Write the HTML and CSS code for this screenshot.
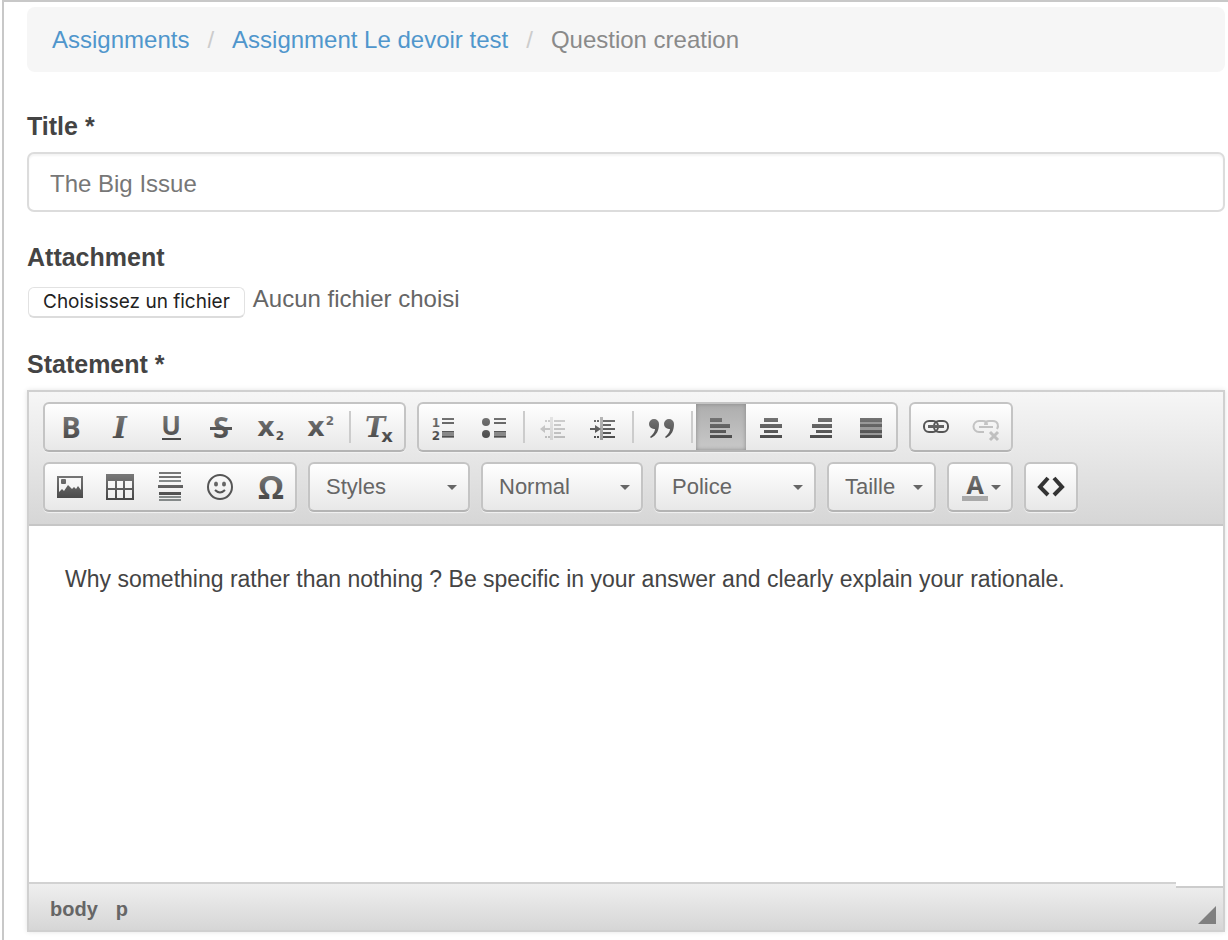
FILE: index.html
```html
<!DOCTYPE html>
<html lang="en">
<head>
<meta charset="utf-8">
<meta name="viewport" content="width=device-width, initial-scale=1">
<title>Question creation</title>
<link rel="stylesheet" href="styles.css">
</head>
<body>
<main class="page">
  <svg class="defs" aria-hidden="true">
    <defs>
      <linearGradient id="ink" gradientUnits="userSpaceOnUse" x1="0" y1="4" x2="0" y2="28">
        <stop offset="0" stop-color="#777"/><stop offset="1" stop-color="#484848"/>
      </linearGradient>
    </defs>
  </svg>
  <nav aria-label="Breadcrumb">
    <ol class="breadcrumb">
      <li><a href="#">Assignments</a></li>
      <li><a href="#">Assignment Le devoir test</a></li>
      <li class="current" aria-current="page">Question creation</li>
    </ol>
  </nav>

  <form class="form">
    <div class="field">
      <label class="label" for="title">Title *</label>
      <input class="text-input" id="title" type="text" value="The Big Issue">
    </div>

    <div class="field">
      <label class="label" for="file">Attachment</label>
      <div class="file-row">
        <input class="file-native" id="file" type="file">
        <label class="file-button" for="file">Choisissez un fichier</label>
        <span class="file-name">Aucun fichier choisi</span>
      </div>
    </div>

    <div class="field">
      <label class="label" for="statement">Statement *</label>
      <div class="editor">
        <div class="toolbar" role="toolbar" aria-label="Editor">
          <div class="toolbar-row">
            <div class="group">
              <button class="tool" type="button" aria-label="Bold"><svg class="icon" viewBox="0 -1 32 32"><text class="sans" x="17" y="26" font-size="29">B</text></svg></button>
              <button class="tool" type="button" aria-label="Italic"><svg class="icon" viewBox="0 -1 32 32"><text class="slab" x="16" y="26" font-size="29" font-style="italic">I</text></svg></button>
              <button class="tool" type="button" aria-label="Underline"><svg class="icon" viewBox="0 -1 32 32"><text class="sans" x="17" y="23" font-size="26">U</text><path d="M8 26h19v2H8z"/></svg></button>
              <button class="tool" type="button" aria-label="Strikethrough"><svg class="icon" viewBox="0 -1 32 32"><text class="sans" x="17" y="26" font-size="29">S</text><path fill="#555" d="M6 15h22v3H6z"/></svg></button>
              <button class="tool" type="button" aria-label="Subscript"><svg class="icon" viewBox="0 -1 32 32"><text class="heavy" x="12" y="24" font-size="27">x</text><text class="heavy" x="26" y="28" font-size="12">2</text></svg></button>
              <button class="tool" type="button" aria-label="Superscript"><svg class="icon" viewBox="0 -1 32 32"><text class="heavy" x="12" y="24" font-size="27">x</text><text class="heavy" x="26" y="13" font-size="12">2</text></svg></button>
              <span class="sep"></span>
              <button class="tool" type="button" aria-label="Remove format"><svg class="icon" viewBox="0 -1 32 32"><text class="slab" x="12" y="25" font-size="27" font-style="italic">T</text><text class="heavy" x="24" y="30" font-size="18">x</text></svg></button>
            </div>
            <div class="group">
              <button class="tool" type="button" aria-label="Numbered list"><svg class="icon" viewBox="0 -1 32 32"><text class="heavy" x="8" y="15" font-size="12">1</text><text class="heavy" x="8" y="28" font-size="12">2</text><path d="M14 6h12v2H14zM14 10h12v2H14z"/><path fill="#888" d="M14 19h12v7H14z"/><path d="M14 19h12v1H14zM14 24h12v1H14z"/></svg></button>
              <button class="tool" type="button" aria-label="Bulleted list"><svg class="icon" viewBox="0 -1 32 32"><circle cx="8" cy="10" r="4"/><circle cx="8" cy="22" r="4"/><path d="M16 6h12v2H16zM16 10h12v2H16z"/><path fill="#888" d="M16 19h12v7H16z"/><path d="M16 19h12v1H16zM16 24h12v1H16z"/></svg></button>
              <span class="sep"></span>
              <button class="tool" type="button" aria-label="Outdent" disabled><svg class="icon" viewBox="0 -1 32 32"><path opacity=".5" d="M13 5h3v23h-3z"/><path d="M8 8h2v2H8zM11 8h2v2h-2zM8 24h2v2H8zM11 24h2v2h-2zM17 8h11v2H17zM17 12h7v2h-7zM17 16h11v2H17zM17 20h7v2h-7zM17 24h11v2H17zM3 17l5-4v3h5v2H8v3z"/></svg></button>
              <button class="tool" type="button" aria-label="Indent"><svg class="icon" viewBox="0 -1 32 32"><path opacity=".5" d="M13 5h3v23h-3z"/><path d="M7 8h2v2H7zM10 8h2v2h-2zM7 24h2v2H7zM10 24h2v2h-2zM16 8h12v2H16zM16 12h8v2h-8zM16 16h12v2H16zM16 20h8v2h-8zM16 24h12v2H16zM3 16h5v-3l6 4-6 4v-3H3z"/></svg></button>
              <span class="sep"></span>
              <button class="tool" type="button" aria-label="Block quote"><svg class="icon" viewBox="0 -1 32 32"><path d="M8 7a5 5 0 0 1 5 5c0 6-2 11-8 14l-1-1c3-3 5-5 5-8H8A5 5 0 0 1 8 7zM23 7a5 5 0 0 1 5 5c0 6-2 11-8 14l-1-1c3-3 5-5 5-8h-1a5 5 0 0 1 0-10z"/></svg></button>
              <span class="sep"></span>
              <button class="tool active" type="button" aria-label="Align left" aria-pressed="true"><svg class="icon" viewBox="0 -1 32 32"><path d="M5 6h12v4H5zM5 12h20v4H5zM5 18h16v3H5zM5 23h22v3H5z"/></svg></button>
              <button class="tool" type="button" aria-label="Center"><svg class="icon" viewBox="0 -1 32 32"><path d="M9 6h14v4H9zM5 12h22v4H5zM9 18h14v3H9zM5 23h22v3H5z"/></svg></button>
              <button class="tool" type="button" aria-label="Align right"><svg class="icon" viewBox="0 -1 32 32"><path d="M13 6h14v4H13zM7 12h20v4H7zM11 18h16v3H11zM5 23h22v3H5z"/></svg></button>
              <button class="tool" type="button" aria-label="Justify"><svg class="icon" viewBox="0 -1 32 32"><path fill="#999" d="M5 6h22v20H5z"/><path d="M5 6h22v4H5zM5 12h22v3H5zM5 18h22v3H5zM5 23h22v3H5z"/></svg></button>
            </div>
            <div class="group">
              <button class="tool" type="button" aria-label="Link"><svg class="icon" viewBox="0 -1 32 32"><g class="line"><rect x="4" y="9" width="14" height="11" rx="5"/><rect x="14" y="9" width="14" height="11" rx="5"/></g><path d="M8 13h16v3H8z"/></svg></button>
              <button class="tool" type="button" aria-label="Unlink" disabled><svg class="icon" viewBox="0 -1 32 32"><g class="line"><path d="M14 20H9a5 5 0 0 1 0-11h4c3 0 4 2 4 4M15 13c0-2 1-4 4-4h4c5 0 6 5 4 8M9 15h14"/><path stroke-width="3" d="M20 20l8 8M28 20l-8 8"/></g></svg></button>
            </div>
          </div>
          <div class="toolbar-row">
            <div class="group">
              <button class="tool" type="button" aria-label="Image"><svg class="icon" viewBox="0 0 32 32"><path fill-rule="evenodd" d="M3 5h26v22H3zM5 7v14l3-3 2 2 4-6 4 4 2-2 2 2 2-3 3 4V7z"/><rect x="7" y="8" width="5" height="5" rx="1"/></svg></button>
              <button class="tool" type="button" aria-label="Table"><svg class="icon" viewBox="0 0 32 32"><path fill-rule="evenodd" d="M2 3h28v26H2zM4 10v7h7v-7zM13 10v7h6v-7zM21 10v7h7v-7zM4 19v8h7v-8zM13 19v8h6v-8zM21 19v8h7v-8z"/></svg></button>
              <button class="tool" type="button" aria-label="Page break"><svg class="icon" viewBox="0 0 32 32"><path d="M5 1h22v2H5zM5 5h22v2H5zM4 14h25v3H4zM5 21h22v3H5z"/><path fill="#858a8a" d="M5 9h22v2H5zM5 25h22v2H5zM5 28h22v2H5z"/></svg></button>
              <button class="tool" type="button" aria-label="Smiley"><svg class="icon" viewBox="0 0 32 32"><g class="line"><circle cx="16" cy="16" r="12"/><path d="M11 19q5 5 10 0"/></g><ellipse cx="12" cy="13" rx="2" ry="2.500"/><ellipse cx="20" cy="13" rx="2" ry="2.500"/></svg></button>
              <button class="tool" type="button" aria-label="Special character"><svg class="icon" viewBox="0 0 32 32"><text class="sans" x="17" y="28" font-size="33">Ω</text></svg></button>
            </div>
            <div class="group combo wide">
              <select aria-label="Styles"><option>Styles</option></select>
              <svg class="caret" viewBox="0 0 10 5"><path d="M0 0h10L5 5z"/></svg>
            </div>
            <div class="group combo wide">
              <select aria-label="Format"><option>Normal</option></select>
              <svg class="caret" viewBox="0 0 10 5"><path d="M0 0h10L5 5z"/></svg>
            </div>
            <div class="group combo wide">
              <select aria-label="Font"><option>Police</option></select>
              <svg class="caret" viewBox="0 0 10 5"><path d="M0 0h10L5 5z"/></svg>
            </div>
            <div class="group combo narrow">
              <select aria-label="Size"><option>Taille</option></select>
              <svg class="caret" viewBox="0 0 10 5"><path d="M0 0h10L5 5z"/></svg>
            </div>
            <div class="group">
              <button class="tool color" type="button" aria-label="Text colour"><svg class="icon" viewBox="0 0 32 32"><text class="sans" x="16" y="23" font-size="25">A</text><path fill="#aaa" d="M3 25h26v5H3z"/></svg><svg class="caret-small" viewBox="0 0 10 5"><path d="M0 0h10L5 5z"/></svg></button>
            </div>
            <div class="group">
              <button class="tool" type="button" aria-label="Source"><svg class="icon" viewBox="0 0 32 32"><path fill="none" stroke="#333" stroke-width="4" d="M13 7l-8 9 8 8M19 7l8 9-8 8"/></svg></button>
            </div>
          </div>
        </div>
        <textarea class="content" id="statement" spellcheck="false">Why something rather than nothing ? Be specific in your answer and clearly explain your rationale.</textarea>
        <div class="statusbar">
          <a href="#">body</a>
          <a href="#">p</a>
          <svg class="resizer" viewBox="0 0 18 18" aria-hidden="true"><path d="M18 0v18H0z"/></svg>
        </div>
      </div>
    </div>
  </form>
</main>
</body>
</html>
```

FILE: styles.css
```css
* { box-sizing: border-box; }

body {
  margin: 0;
  background: #fff;
  color: #444;
  font-family: "Liberation Sans", Arial, sans-serif;
  font-size: 24px;
  line-height: 32px;
}

.page {
  min-height: 100vh;
  margin-left: 2px;
  padding: 5px 3px 8px 23px;
  border-top: 2px solid #c8c8c8;
  border-left: 2px solid #c8c8c8;
}

.defs { display: block; width: 0; height: 0; }

.breadcrumb {
  display: flex;
  flex-wrap: wrap;
  margin: 0 0 38px;
  padding: 17px 25px 16px;
  border-radius: 8px;
  background: #f6f6f6;
  list-style: none;
}
.breadcrumb li + li::before {
  content: "/";
  padding: 0 18px;
  color: #ccc;
}
.breadcrumb a { color: #5096cc; text-decoration: none; }
.breadcrumb .current { color: #8a8a8a; }

.field { display: flex; flex-direction: column; }
.form { display: flex; flex-direction: column; gap: 29px; }

.label {
  margin-bottom: 10px;
  color: #444;
  font-size: 25px;
  font-weight: bold;
}

.text-input {
  width: 100%;
  height: 60px;
  padding: 4px 21px 0;
  border: 2px solid #dcdcdc;
  border-radius: 7px;
  background: #fff;
  box-shadow: inset 0 2px 2px #f4f4f4;
  color: #777;
  font: inherit;
}

.file-row {
  display: flex;
  align-items: flex-start;
  gap: 8px;
  margin-bottom: 1px;
  color: #666;
}
.file-native {
  position: absolute;
  width: 1px;
  height: 1px;
  opacity: 0;
}
.file-button {
  margin: 4px 0 0 1px;
  padding: 0 14px;
  border: 1px solid #e2e2e2;
  border-bottom: 2px solid #dcdcdc;
  border-radius: 6px;
  background: #fff;
  color: #222;
  font: 19px/28px Inter, sans-serif;
}

.editor {
  display: flex;
  flex-direction: column;
  min-height: 542px;
  border: 2px solid #d0d0d0;
  box-shadow: 0 0 5px #e4e4e4;
}

.toolbar {
  display: flex;
  flex-direction: column;
  gap: 10px;
  padding: 10px 14px 12px;
  border-bottom: 2px solid #c6c6c6;
  background: linear-gradient(#f6f6f6, #d6d6d6);
}
.toolbar-row { display: flex; flex-wrap: wrap; gap: 11px; }

.group {
  display: flex;
  align-items: center;
  height: 50px;
  border: 2px solid #c4c4c4;
  border-bottom-color: #b4b4b4;
  border-radius: 6px;
  background: linear-gradient(#fff, #e8e8e8);
  box-shadow: 0 1px 1px #f2f2f2;
}

.tool {
  display: flex;
  align-items: center;
  justify-content: center;
  width: 50px;
  height: 46px;
  padding: 0;
  border: 0;
  background: none;
}
.tool:disabled { opacity: .3; }
.tool.active {
  background: linear-gradient(#adadad, #c9c9c9);
  box-shadow: inset 0 0 4px #888;
}
.tool.color { width: 62px; }

.sep {
  width: 9px;
  height: 32px;
  background: linear-gradient(#ccc, #ccc) 4px 0 / 2px 100% no-repeat;
}

.icon { width: 32px; height: 32px; overflow: visible; fill: url(#ink); }
.icon text { font-weight: bold; text-anchor: middle; }
.sans { font-family: "Open Sans", "Noto Sans", sans-serif; }
.heavy { font-family: "DejaVu Sans", sans-serif; }
.slab { font-family: "DejaVu Serif", serif; }
.line { fill: none; stroke: #555; stroke-width: 2; }

.combo { display: grid; }
.combo select {
  grid-area: 1 / 1;
  width: 100%;
  height: 46px;
  padding: 0 30px 2px 16px;
  border: 0;
  background: none;
  appearance: none;
  color: #666;
  font: 22px "Liberation Sans", Arial, sans-serif;
}
.wide { width: 162px; }
.narrow { width: 109px; }
.caret {
  grid-area: 1 / 1;
  justify-self: end;
  width: 10px;
  height: 5px;
  margin-right: 11px;
  fill: #666;
  pointer-events: none;
}
.caret-small { width: 10px; height: 5px; fill: #666; }

.content {
  flex: 1;
  width: 100%;
  padding: 37px 36px;
  border: 0;
  outline: 0;
  background: #fff;
  color: #444;
  font: 23px/32px "Liberation Sans", Arial, sans-serif;
  resize: none;
}

.statusbar {
  position: relative;
  display: flex;
  align-items: center;
  gap: 18px;
  height: 48px;
  padding: 3px 7px 0 21px;
  border-top: 2px solid #d2d2d2;
  background: linear-gradient(#efefef, #d6d6d6);
}
.statusbar::after {
  content: "";
  position: absolute;
  top: -2px;
  right: 0;
  width: 47px;
  height: 4px;
  border-bottom: 2px solid #ccc;
  background: #fff;
}
.statusbar a {
  color: #666;
  font-size: 20px;
  font-weight: bold;
  text-decoration: none;
}
.resizer {
  align-self: flex-end;
  width: 18px;
  height: 18px;
  margin: 0 0 6px auto;
  fill: #808080;
}
```
